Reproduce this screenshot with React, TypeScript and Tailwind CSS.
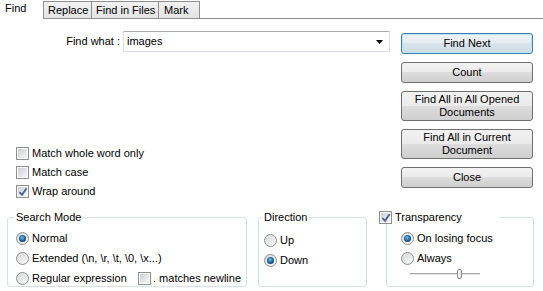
import React from "react";

function CheckBox({ checked = false }: { checked?: boolean }) {
  return (
    <span className="relative flex h-[13px] w-[13px] shrink-0 items-center justify-center border border-[#8e8f8f] bg-white">
      <span className="h-[9px] w-[9px] bg-[linear-gradient(135deg,#cbcfd5,#f6f6f6)]" />
      {checked && (
        <svg className="absolute left-[1px] top-[1px]" width="10" height="10" viewBox="0 0 10 10">
          <path d="M1.5 5.2 L4 7.8 L8.6 1.2" fill="none" stroke="#4a5f97" strokeWidth="1.8" />
        </svg>
      )}
    </span>
  );
}

function Radio({ checked = false }: { checked?: boolean }) {
  return (
    <span className="flex h-[13px] w-[13px] shrink-0 items-center justify-center rounded-full border border-[#8e8f8f] bg-[linear-gradient(135deg,#d4d6d9,#fbfbfb)]">
      {checked && (
        <span className="h-[7px] w-[7px] rounded-full bg-[radial-gradient(circle_at_45%_40%,#7cc3ec,#1d5f99_50%,#0c2f57)]" />
      )}
    </span>
  );
}

function Button({ children, focused = false, tall = false }: { children: React.ReactNode; focused?: boolean; tall?: boolean }) {
  return (
    <button
      className={
        focused
          ? "flex h-[21px] items-center justify-center rounded-[3px] border border-[#3c7fb1] bg-[linear-gradient(#eef3f6,#e6edf2_50%,#d9e3ea_50%,#cfdbe4)] text-[11px] leading-[13px] shadow-[inset_0_0_0_1px_#b9e5f9]"
          : tall
          ? "flex h-[30px] items-center justify-center rounded-[3px] border border-[#707070] bg-[linear-gradient(#f2f2f2,#ebebeb_50%,#dddddd_50%,#cfcfcf)] px-2 text-center text-[11px] leading-[13px]"
          : "flex h-[21px] items-center justify-center rounded-[3px] border border-[#707070] bg-[linear-gradient(#f2f2f2,#ebebeb_50%,#dddddd_50%,#cfcfcf)] text-[11px] leading-[13px]"
      }
    >
      {children}
    </button>
  );
}

export default function App() {
  return (
    <div className="h-[291px] w-[543px] overflow-hidden bg-white font-['Liberation_Sans',sans-serif] text-[11px] leading-[13px] text-black">
      {/* tabs */}
      <div className="flex h-[19px]">
        <div className="w-[43px] pl-[5px] pt-[2px]">Find</div>
        <div className="mt-[1px] flex h-[18px] w-[48px] items-center border-b border-l border-t border-[#8e8f8f] bg-[linear-gradient(#f2f2f2,#e3e3e3)] pl-[4px]">Replace</div>
        <div className="mt-[1px] flex h-[18px] w-[67px] items-center border-b border-l border-t border-[#8e8f8f] bg-[linear-gradient(#f2f2f2,#e3e3e3)] pl-[4px]">Find in Files</div>
        <div className="mt-[1px] flex h-[18px] w-[42px] items-center border border-[#8e8f8f] bg-[linear-gradient(#f2f2f2,#e3e3e3)] pl-[5px]">Mark</div>
        <div className="flex-1 border-b border-[#8e8f8f]" />
      </div>

      {/* top section */}
      <div className="flex">
        <div className="flex flex-1 flex-col">
          <div className="mt-[12px] flex h-[21px] items-center">
            <span className="w-[120px] text-right">Find what :</span>
            <div className="ml-[3px] flex h-[21px] w-[267px] items-center border border-[#dbdfe6] border-t-[#abadb3] pl-[3px] pr-[6px]">
              <span className="flex-1">images</span>
              <svg width="7" height="4" viewBox="0 0 7 4">
                <path d="M0 0 H7 L3.5 4 Z" fill="#000" />
              </svg>
            </div>
          </div>
          <div className="mt-[92px] flex flex-col pl-[16px]">
            <label className="flex h-[19px] items-center gap-[3px]">
              <CheckBox />
              Match whole word only
            </label>
            <label className="flex h-[19px] items-center gap-[3px]">
              <CheckBox />
              Match case
            </label>
            <label className="flex h-[19px] items-center gap-[3px]">
              <CheckBox checked />
              Wrap around
            </label>
          </div>
        </div>
        <div className="mr-[10px] flex w-[132px] flex-col gap-2 pt-[14px]">
          <Button focused>Find Next</Button>
          <Button>Count</Button>
          <Button tall>Find All in All Opened Documents</Button>
          <Button tall>Find All in Current Document</Button>
          <Button>Close</Button>
        </div>
      </div>

      {/* group boxes */}
      <div className="mt-[10px] flex">
        <fieldset className="ml-[7px] h-[76px] w-[240px] rounded-[3px] border border-[#d5dfe5] pl-[8px]">
          <legend className="ml-[-2px] px-[2px]">Search Mode</legend>
          <div className="flex flex-col pt-[4px]">
            <label className="flex h-[20px] items-center gap-[3px]">
              <Radio checked />
              Normal
            </label>
            <label className="flex h-[20px] items-center gap-[3px]">
              <Radio />
              Extended (\n, \r, \t, \0, \x...)
            </label>
            <div className="flex h-[20px] items-center">
              <label className="flex w-[122px] items-center gap-[3px]">
                <Radio />
                Regular expression
              </label>
              <label className="flex items-center gap-[2px]">
                <CheckBox />
                . matches newline
              </label>
            </div>
          </div>
        </fieldset>

        <fieldset className="ml-[11px] h-[76px] w-[109px] rounded-[3px] border border-[#d5dfe5] pl-[5px]">
          <legend className="ml-[-2px] px-[2px]">Direction</legend>
          <div className="flex flex-col pt-[6px]">
            <label className="flex h-[20px] items-center gap-[3px]">
              <Radio />
              Up
            </label>
            <label className="flex h-[20px] items-center gap-[3px]">
              <Radio checked />
              Down
            </label>
          </div>
        </fieldset>

        <fieldset className="ml-[19px] h-[76px] w-[148px] rounded-[3px] border border-[#d5dfe5] pl-[14px]">
          <legend className="ml-[-22px] flex w-[120px] items-center gap-[3px] bg-white">
            <CheckBox checked />
            Transparency
          </legend>
          <div className="flex flex-col pt-[4px]">
            <label className="flex h-[20px] items-center gap-[3px]">
              <Radio checked />
              On losing focus
            </label>
            <label className="flex h-[20px] items-center gap-[3px]">
              <Radio />
              Always
            </label>
            <div className="flex h-[12px] items-center pl-[9px]">
              <div className="relative h-[2px] w-[70px] border-t border-[#a8a8a8] border-b-white bg-[#e6e6e6]">
                <span className="absolute left-[47px] top-[-5px] h-[10px] w-[5px] rounded-[2px] border border-[#8a8a8a] bg-[linear-gradient(90deg,#ffffff,#e0e0e0)]" />
              </div>
            </div>
          </div>
        </fieldset>
      </div>
    </div>
  );
}
